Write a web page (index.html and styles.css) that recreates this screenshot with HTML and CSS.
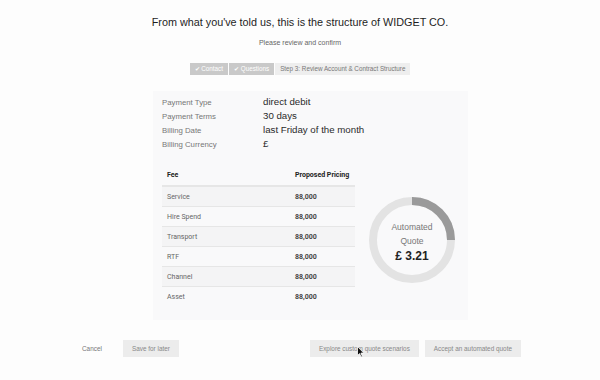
FILE: index.html
```html
<!DOCTYPE html>
<html lang="en">

<head>
    <meta charset="UTF-8">
    <meta name="viewport" content="width=device-width, initial-scale=1.0">
    <title>Review Structure</title>
    <link rel="stylesheet" href="styles.css">
</head>

<body>
    <div class="page">
        <h1 class="heading">From what you've told us, this is the structure of WIDGET CO.</h1>
        <p class="subheading">Please review and confirm</p>

        <div class="steps">
            <span class="step done">&#10004; Contact</span>
            <span class="step done">&#10004; Questions</span>
            <span class="step current">Step 3: Review Account &amp; Contract Structure</span>
        </div>

        <div class="card">
            <div class="details">
                <div class="detail-row"><span class="label">Payment Type</span><span class="value">direct debit</span></div>
                <div class="detail-row"><span class="label">Payment Terms</span><span class="value">30 days</span></div>
                <div class="detail-row"><span class="label">Billing Date</span><span class="value">last Friday of the month</span></div>
                <div class="detail-row"><span class="label">Billing Currency</span><span class="value">&pound;</span></div>
            </div>

            <div class="pricing">
                <table class="fees">
                    <thead>
                        <tr><th>Fee</th><th>Proposed Pricing</th></tr>
                    </thead>
                    <tbody>
                        <tr><td>Service</td><td class="amount">88,000</td></tr>
                        <tr><td>Hire Spend</td><td class="amount">88,000</td></tr>
                        <tr><td>Transport</td><td class="amount">88,000</td></tr>
                        <tr><td>RTF</td><td class="amount">88,000</td></tr>
                        <tr><td>Channel</td><td class="amount">88,000</td></tr>
                        <tr><td>Asset</td><td class="amount">88,000</td></tr>
                    </tbody>
                </table>

                <div class="donut">
                    <svg width="86" height="86" viewBox="0 0 86 86">
                        <circle cx="43" cy="43" r="39" fill="none" stroke="#e3e3e3" stroke-width="8" />
                        <!-- quarter of the ring, starting at 12 o'clock -->
                        <circle cx="43" cy="43" r="39" fill="none" stroke="#9a9a9a" stroke-width="8"
                            stroke-dasharray="61.26 245.04" transform="rotate(-90 43 43)" />
                    </svg>
                    <div class="donut-text">
                        <span class="donut-label">Automated<br>Quote</span>
                        <span class="donut-value">&pound; 3.21</span>
                    </div>
                </div>
            </div>
        </div>

        <div class="actions">
            <div class="action-group">
                <button class="button link">Cancel</button>
                <button class="button">Save for later</button>
            </div>
            <div class="action-group">
                <button class="button">Explore custom quote scenarios</button>
                <button class="button">Accept an automated quote</button>
            </div>
        </div>

        <svg class="cursor" width="8" height="12" viewBox="0 0 8 12">
            <path d="M0.5 0.5 L0.5 9.5 L2.6 7.6 L4.1 11 L5.4 10.4 L3.9 7.1 L6.8 7.1 Z" fill="#111" stroke="#fff" stroke-width="0.8" />
        </svg>
    </div>
</body>

</html>
```

FILE: styles.css
```css
body {
    margin: 0;
    padding: 0;
    background-color: #fdfdfd;
    font-family: "Liberation Sans", Arial, sans-serif;
    color: #222;
}

.page {
    position: relative;
    width: 600px;
    height: 380px;
    padding-top: 15px;
    box-sizing: border-box;
}

.heading {
    margin: 0;
    font-size: 10.8px;
    line-height: 14px;
    font-weight: normal;
    text-align: center;
    color: #1e1e1e;
}

.subheading {
    margin: 9px 0 0;
    font-size: 7px;
    line-height: 10px;
    text-align: center;
    color: #666;
}

/* Step indicator */
.steps {
    display: flex;
    justify-content: center;
    gap: 1px;
    margin-top: 15px;
}

.step {
    height: 12px;
    line-height: 12px;
    padding: 0 5px;
    font-size: 6.3px;
}

.step.done {
    background-color: #c9c9c9;
    color: #fff;
}

.step.current {
    background-color: #eeeeee;
    color: #777;
}

/* Account card */
.card {
    width: 315px;
    margin: 16px 0 0 153px;
    padding: 4px 9px 14px;
    box-sizing: border-box;
    background-color: #f9f9fa;
}

.detail-row {
    display: flex;
    align-items: baseline;
    height: 14px;
    line-height: 14px;
}

.label {
    width: 101px;
    font-size: 7.8px;
    color: #777;
    font-weight: 300;
}

.value {
    font-size: 9.7px;
    color: #2a2a2a;
}

.pricing {
    display: flex;
    gap: 14px;
    margin-top: 12px;
}

.fees {
    width: 193px;
    border-collapse: collapse;
    font-family: Roboto, "Liberation Sans", sans-serif;
    font-size: 7px;
}

.fees th {
    height: 20px;
    padding: 2px 5px 0;
    text-align: left;
    font-weight: bold;
    color: #222;
    border-bottom: 2px solid #e6e6e6;
}

.fees th:first-child {
    width: 118px;
}

.fees td {
    height: 19px;
    padding: 0 5px;
    color: #666;
    border-bottom: 1px solid #e6e6e6;
}

.fees tbody tr:nth-child(odd) td {
    background-color: #f4f4f5;
}

.fees tbody tr:last-child td {
    border-bottom: none;
}

.fees td.amount {
    font-weight: bold;
    color: #444;
}

/* Quote ring */
.donut {
    display: grid;
    width: 86px;
    height: 86px;
    margin-top: 34px;
}

.donut svg,
.donut-text {
    grid-area: 1 / 1;
}

.donut-text {
    display: flex;
    flex-direction: column;
    align-items: center;
    justify-content: center;
    text-align: center;
    padding-top: 4px;
}

.donut-label {
    font-size: 8.5px;
    line-height: 14px;
    color: #777;
    font-weight: 300;
}

.donut-value {
    font-size: 12px;
    line-height: 16px;
    font-weight: bold;
    color: #222;
}

/* Bottom buttons */
.actions {
    display: flex;
    justify-content: space-between;
    margin-top: 20px;
    padding: 0 79px 0 72px;
}

.action-group {
    display: flex;
    gap: 6px;
}

.action-group:first-child {
    gap: 11px;
}

.button {
    height: 17px;
    padding: 0 9px;
    border: none;
    background-color: #ececec;
    color: #888;
    font-family: "Liberation Sans", Arial, sans-serif;
    font-size: 6.4px;
    cursor: pointer;
}

.button.link {
    padding: 0 10px;
    background: none;
    color: #777;
}

.cursor {
    position: absolute;
    left: 357px;
    top: 346px;
}
```
